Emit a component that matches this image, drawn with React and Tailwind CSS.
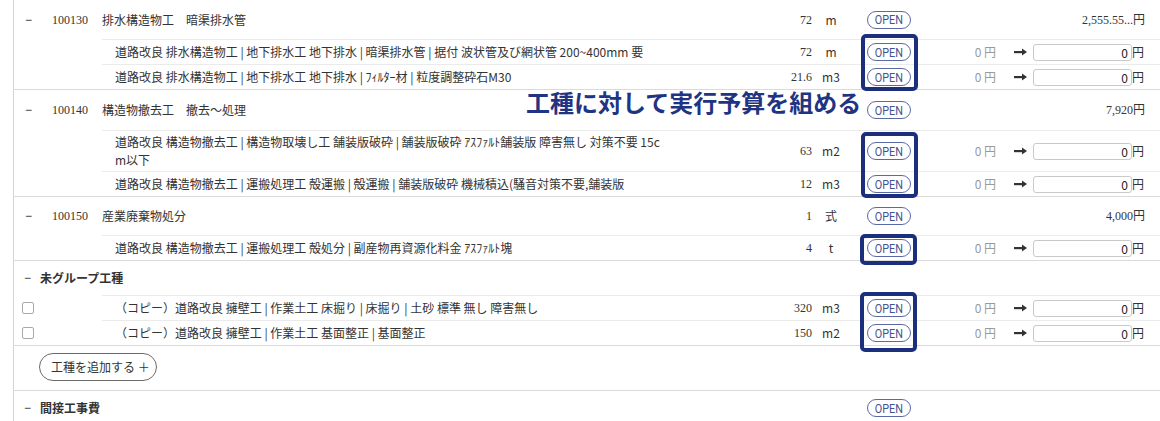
import React from 'react';

// 実行予算 — 工種ごとの明細テーブル（注釈つきスクリーンショット）

const serif = "font-['Liberation_Serif','Noto_Sans_CJK_JP',serif]";

function OpenPill() {
  return (
    <span className="inline-flex h-[18px] w-[44px] items-center justify-center rounded-full border border-[#5b6aa6] text-[#44538e]">
      <span className="inline-block scale-x-[0.83] font-['Roboto',sans-serif] text-[13px] leading-none">OPEN</span>
    </span>
  );
}

function Arrow() {
  return (
    <svg width="13" height="8" viewBox="0 0 13 8" className="block">
      <rect x="0" y="3" width="9" height="2.2" fill="#333" />
      <path d="M8 0.5 L13 4 L8 7.5 Z" fill="#333" />
    </svg>
  );
}

// qty / unit / OPEN columns shared by every row
function MidCols({ qty, unit, open = true }) {
  return (
    <>
      <div className={`w-[132px] shrink-0 text-right ${serif}`}>{qty}</div>
      <div className="w-[38px] shrink-0 text-center">{unit}</div>
      <div className="flex w-[70px] shrink-0 pl-[17px]">{open && <OpenPill />}</div>
    </>
  );
}

function GroupRow({ code, title, qty, unit, amount, h, first }) {
  return (
    <div className={`flex items-center ${h} ${first ? '' : 'border-t border-[#dadada]'}`}>
      <div className="w-[38px] shrink-0 pl-[11px] font-['Liberation_Sans',sans-serif]">−</div>
      <div className={`w-[50px] shrink-0 ${serif}`}>{code}</div>
      <div className="min-w-0 flex-1">{title}</div>
      <MidCols qty={qty} unit={unit} />
      <div className={`w-[225px] shrink-0 text-right ${serif}`}>{amount}</div>
      <div className="w-[15px] shrink-0" />
    </div>
  );
}

function SubRow({ text, qty, unit, check, tall }) {
  return (
    <div className="flex">
      <div className="flex w-[88px] shrink-0 items-center pl-[8px]">
        {check && <span className="block h-[12px] w-[12px] rounded-[2px] border border-[#a9a9a9] bg-white" />}
      </div>
      <div className={`flex min-w-0 flex-1 items-center border-t border-[#ebebeb] ${tall ? 'h-[41px]' : 'h-[25px]'}`}>
        <div className="min-w-0 flex-1 pl-[13px]">
          <div className="max-w-[550px] break-all">{text}</div>
        </div>
        <MidCols qty={qty} unit={unit} />
        <div className="w-[76px] shrink-0 text-right text-[#9a9a9a]">0 円</div>
        <div className="flex w-[37px] shrink-0 pl-[18px]">
          <Arrow />
        </div>
        <input
          readOnly
          value="0"
          className="h-[17px] w-[99px] shrink-0 rounded-[3px] border border-[#c9c9c9] bg-white pr-[3px] text-right text-[12px] leading-[15px] text-[#222] outline-none"
        />
        <div className="w-[13px] shrink-0">円</div>
        <div className="w-[15px] shrink-0" />
      </div>
    </div>
  );
}

function HeaderRow({ title, open, h = 'h-[35px]' }) {
  return (
    <div className={`flex items-center border-t border-[#dadada] ${h}`}>
      <div className="w-[26px] shrink-0 pl-[10px] font-['Liberation_Sans',sans-serif]">−</div>
      <div className="min-w-0 flex-1 font-bold">{title}</div>
      <MidCols open={open} />
      <div className="w-[240px] shrink-0" />
    </div>
  );
}

const Box = ({ className }) => (
  <div className={`pointer-events-none absolute rounded-[5px] border-[4px] border-[#1c2f7c] ${className}`} />
);

export default function App() {
  return (
    <div className="relative h-[421px] w-[1160px] overflow-hidden bg-white font-['Noto_Sans_CJK_JP',sans-serif] text-[12px] leading-[18px] text-[#333]">
      <div className="ml-[13px] h-full border-l border-[#d4d4d4]">
        <GroupRow first h="h-[39px]" code="100130" title="排水構造物工　暗渠排水管" qty="72" unit="m" amount="2,555.55...円" />
        <SubRow text="道路改良 排水構造物工 | 地下排水工 地下排水 | 暗渠排水管 | 据付 波状管及び網状管 200~400mm 要" qty="72" unit="m" />
        <SubRow text="道路改良 排水構造物工 | 地下排水工 地下排水 | ﾌｨﾙﾀｰ材 | 粒度調整砕石M30" qty="21.6" unit="m3" />

        <GroupRow h="h-[41px]" code="100140" title="構造物撤去工　撤去～処理" qty="" unit="" amount="7,920円" />
        <SubRow tall text="道路改良 構造物撤去工 | 構造物取壊し工 舗装版破砕 | 舗装版破砕 ｱｽﾌｧﾙﾄ舗装版 障害無し 対策不要 15cm以下" qty="63" unit="m2" />
        <SubRow text="道路改良 構造物撤去工 | 運搬処理工 殻運搬 | 殻運搬 | 舗装版破砕 機械積込(騒音対策不要,舗装版" qty="12" unit="m3" />

        <GroupRow h="h-[39px]" code="100150" title="産業廃棄物処分" qty="1" unit="式" amount="4,000円" />
        <SubRow text="道路改良 構造物撤去工 | 運搬処理工 殻処分 | 副産物再資源化料金 ｱｽﾌｧﾙﾄ塊" qty="4" unit="t" />

        <HeaderRow title="未グループ工種" open={false} />
        <SubRow check text="（コピー）道路改良 擁壁工 | 作業土工 床掘り | 床掘り | 土砂 標準 無し 障害無し" qty="320" unit="m3" />
        <SubRow check text="（コピー）道路改良 擁壁工 | 作業土工 基面整正 | 基面整正" qty="150" unit="m2" />

        <div className="h-[45px] border-t border-[#dadada] pl-[25px] pt-[7px]">
          <button className="flex h-[28px] w-[118px] items-center rounded-full border border-[#6a6a6a] bg-white pl-[11px] text-[12px] text-[#333]">
            工種を追加する ＋
          </button>
        </div>

        <HeaderRow title="間接工事費" open />
      </div>

      {/* annotation overlay */}
      <Box className="left-[861px] top-[34px] h-[57px] w-[57px]" />
      <Box className="left-[861px] top-[132px] h-[66px] w-[57px]" />
      <Box className="left-[860px] top-[234px] h-[31px] w-[57px]" />
      <Box className="left-[860px] top-[292px] h-[60px] w-[57px]" />
      <div className="pointer-events-none absolute left-[526px] top-[88px] text-[24px] font-bold leading-[28px] text-[#1f3482]">
        工種に対して実行予算を組める
      </div>
    </div>
  );
}
